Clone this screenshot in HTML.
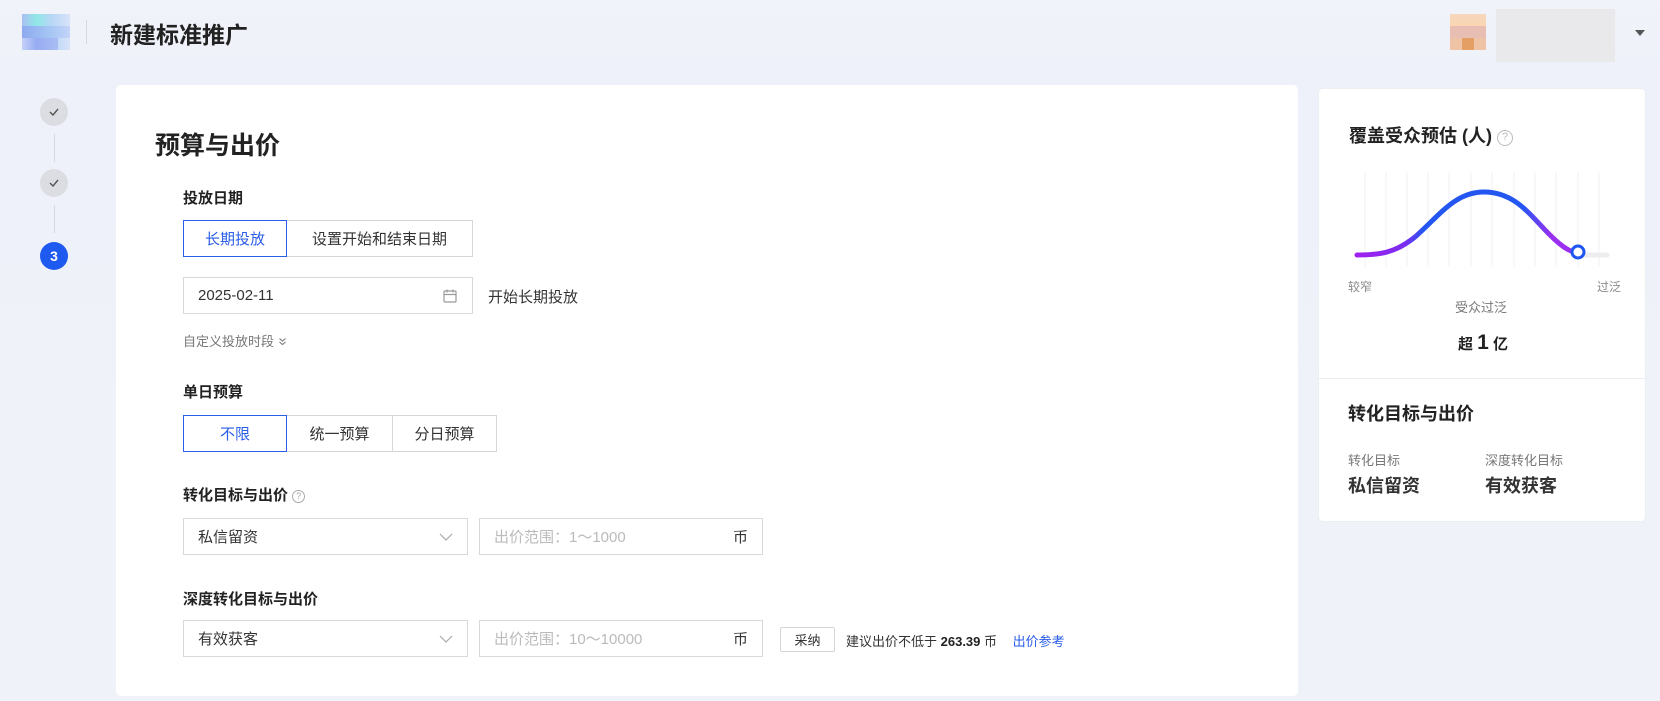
<!DOCTYPE html>
<html><head><meta charset="utf-8"><style>
*{margin:0;padding:0;box-sizing:border-box}
body{width:1660px;height:701px;overflow:hidden;background:linear-gradient(180deg,#f1f3fa 0,#eef1f9 70px,#f0f2f9 100%);font-family:"Liberation Sans","Noto Sans CJK SC",sans-serif;color:#222;position:relative;font-size:15px}
.a{position:absolute}
.card{position:absolute;left:116px;top:85px;width:1182px;height:611px;background:#fff;border-radius:5px}
.lbl{position:absolute;left:183px;font-size:15px;font-weight:600;color:#222}
.btn{position:absolute;height:37px;border:1px solid #d6d6d6;background:#fff;display:flex;align-items:center;justify-content:center;font-size:15px;color:#333}
.btn.on{border-color:#2a5de8;color:#2a5de8;z-index:2}
.inp{position:absolute;height:37px;border:1px solid #d9d9d9;background:#fff;display:flex;align-items:center;padding:0 14px;font-size:15px;color:#333}
.ph{color:#bbb}
.step{position:absolute;left:40px;width:28px;height:28px;border-radius:50%;background:#dcdde2;color:#555;font-size:12px;display:flex;align-items:center;justify-content:center}
.vl{position:absolute;left:54px;width:1px;background:#d8d9de}
</style></head><body>
<div class="a" style="left:22px;top:14px;width:48px;height:36px;background:linear-gradient(90deg,#a9bff2,#90e8e6 30%,#b6d6f5 60%,#d9e3f9)"></div>
<div class="a" style="left:22px;top:26px;width:48px;height:12px;background:linear-gradient(90deg,#8ea9f0,#a5c7f3 60%,#c5d3f8)"></div>
<div class="a" style="left:22px;top:38px;width:36px;height:12px;background:linear-gradient(90deg,#c4d1f8,#97acf2 40%,#a9bcf3)"></div>
<div class="a" style="left:86px;top:20px;width:1px;height:24px;background:#d5d8e0"></div>
<div class="a" style="left:110px;top:16px;font-size:23px;font-weight:600;color:#222">新建标准推广</div>
<div class="a" style="left:1450px;top:14px;width:36px;height:36px;background:linear-gradient(180deg,#f6d6be 0,#f8d6b1 33%,#e9bdb3 33%,#e8bfb2 66%,#eec3a6 66%)"></div>
<div class="a" style="left:1462px;top:38px;width:12px;height:12px;background:#e4a064"></div>
<div class="a" style="left:1496px;top:9px;width:119px;height:53px;background:#e9e9ec"></div>
<div class="a" style="left:1635px;top:30px;width:0;height:0;border-left:5px solid transparent;border-right:5px solid transparent;border-top:6px solid #555"></div>

<div class="step" style="top:98px"><svg width="10" height="8" viewBox="0 0 10 8" fill="none" stroke="#555" stroke-width="1.4"><path d="M1 4l3 3 5-6"/></svg></div>
<div class="vl" style="top:134px;height:28px"></div>
<div class="step" style="top:169px"><svg width="10" height="8" viewBox="0 0 10 8" fill="none" stroke="#555" stroke-width="1.4"><path d="M1 4l3 3 5-6"/></svg></div>
<div class="vl" style="top:205px;height:28px"></div>
<div class="step" style="top:242px;background:#1f5af0;color:#fff;font-weight:700;font-size:14px">3</div>

<div class="card"></div>
<div class="a" style="left:155px;top:126px;font-size:25px;font-weight:600;color:#222">预算与出价</div>
<div class="lbl" style="top:187px">投放日期</div>
<div class="btn on" style="left:183px;top:220px;width:104px">长期投放</div>
<div class="btn" style="left:286px;top:220px;width:187px">设置开始和结束日期</div>
<div class="inp" style="left:183px;top:277px;width:290px;justify-content:space-between">2025-02-11<svg width="16" height="16" viewBox="0 0 16 16" fill="none" stroke="#999" stroke-width="1.2"><rect x="2" y="3" width="12" height="11" rx="1"/><path d="M2 6.5h12M5 1.5v3M11 1.5v3"/></svg></div>
<div class="a" style="left:488px;top:286px;font-size:15px;color:#333">开始长期投放</div>
<div class="a" style="left:183px;top:331px;font-size:13px;color:#777">自定义投放时段 <svg width="9" height="9" viewBox="0 0 9 9" fill="none" stroke="#777" stroke-width="1.1"><path d="M1.5 1.5l3 2.5 3-2.5M1.5 5l3 2.5 3-2.5"/></svg></div>
<div class="lbl" style="top:381px">单日预算</div>
<div class="btn on" style="left:183px;top:415px;width:104px">不限</div>
<div class="btn" style="left:286px;top:415px;width:107px">统一预算</div>
<div class="btn" style="left:392px;top:415px;width:105px">分日预算</div>
<div class="lbl" style="top:484px">转化目标与出价 <span style="display:inline-block;width:13px;height:13px;border:1px solid #aaa;border-radius:50%;font-size:9px;color:#aaa;text-align:center;line-height:11px;font-weight:400;vertical-align:1px">?</span></div>
<div class="inp" style="left:183px;top:518px;width:285px;justify-content:space-between">私信留资<svg width="14" height="10" viewBox="0 0 14 10" fill="none" stroke="#aaa" stroke-width="1.2"><path d="M1 2l6 6 6-6"/></svg></div>
<div class="inp" style="left:479px;top:518px;width:284px;justify-content:space-between"><span class="ph">出价范围：1～1000</span><span>币</span></div>
<div class="lbl" style="top:588px">深度转化目标与出价</div>
<div class="inp" style="left:183px;top:620px;width:285px;justify-content:space-between">有效获客<svg width="14" height="10" viewBox="0 0 14 10" fill="none" stroke="#aaa" stroke-width="1.2"><path d="M1 2l6 6 6-6"/></svg></div>
<div class="inp" style="left:479px;top:620px;width:284px;justify-content:space-between"><span class="ph">出价范围：10～10000</span><span>币</span></div>
<div class="btn" style="left:780px;top:627px;width:55px;height:25px;font-size:13px;border-radius:2px">采纳</div>
<div class="a" style="left:846px;top:631px;font-size:13px;color:#333">建议出价不低于 <b style="color:#222">263.39</b> 币 <span style="color:#2a5de8;margin-left:12px">出价参考</span></div>

<div class="a" style="left:1318px;top:88px;width:328px;height:434px;background:#fff;border-radius:5px;border:1px solid #eceef3"></div>
<div class="a" style="left:1318px;top:378px;width:328px;height:1px;background:#ebedf1"></div>
<div class="a" style="left:1349px;top:122px;font-size:18px;font-weight:600;color:#222">覆盖受众预估 (人) <span style="display:inline-block;width:16px;height:16px;border:1.5px solid #bbb;border-radius:50%;font-size:11px;color:#bbb;text-align:center;line-height:13px;font-weight:400;vertical-align:2px">?</span></div>
<svg class="a" style="left:1340px;top:165px" width="290" height="110" viewBox="0 0 290 110">
<defs><linearGradient id="g" x1="0" x2="1"><stop offset="0" stop-color="#a020f0"/><stop offset=".22" stop-color="#7a2ef0"/><stop offset=".3" stop-color="#2456f2"/><stop offset=".75" stop-color="#2456f2"/><stop offset=".88" stop-color="#9b2ff0"/></linearGradient></defs>
<g stroke="#f0f1f4" stroke-width="1"><path d="M25 7v95M46 7v95M67 7v95M88 7v95M109 7v95M131 7v95M152 7v95M174 7v95M195 7v95M216 7v95M238 7v95M259 7v95"/></g>
<path d="M238 90H267" stroke="#ededf0" stroke-width="5" stroke-linecap="round"/>
<path d="M17 90C40 90 55 88 75 72C100 50 115 27 144 27C175 27 190 50 210 70C225 85 232 87 238 88" fill="none" stroke="url(#g)" stroke-width="5" stroke-linecap="round"/>
<circle cx="238" cy="87" r="6" fill="#fff" stroke="#1f56f0" stroke-width="3"/>
</svg>
<div class="a" style="left:1348px;top:278px;font-size:12px;color:#888">较窄</div>
<div class="a" style="left:1597px;top:278px;font-size:12px;color:#888">过泛</div>
<div class="a" style="left:1455px;top:297px;font-size:13px;color:#777">受众过泛</div>
<div class="a" style="left:1458px;top:331px;font-size:15px;font-weight:600;color:#222">超 <span style="font-size:21px">1</span> 亿</div>
<div class="a" style="left:1348px;top:400px;font-size:18px;font-weight:600;color:#222">转化目标与出价</div>
<div class="a" style="left:1348px;top:450px;font-size:13px;color:#777">转化目标</div>
<div class="a" style="left:1485px;top:450px;font-size:13px;color:#777">深度转化目标</div>
<div class="a" style="left:1348px;top:472px;font-size:18px;font-weight:600;color:#333">私信留资</div>
<div class="a" style="left:1485px;top:472px;font-size:18px;font-weight:600;color:#333">有效获客</div>
</body></html>
